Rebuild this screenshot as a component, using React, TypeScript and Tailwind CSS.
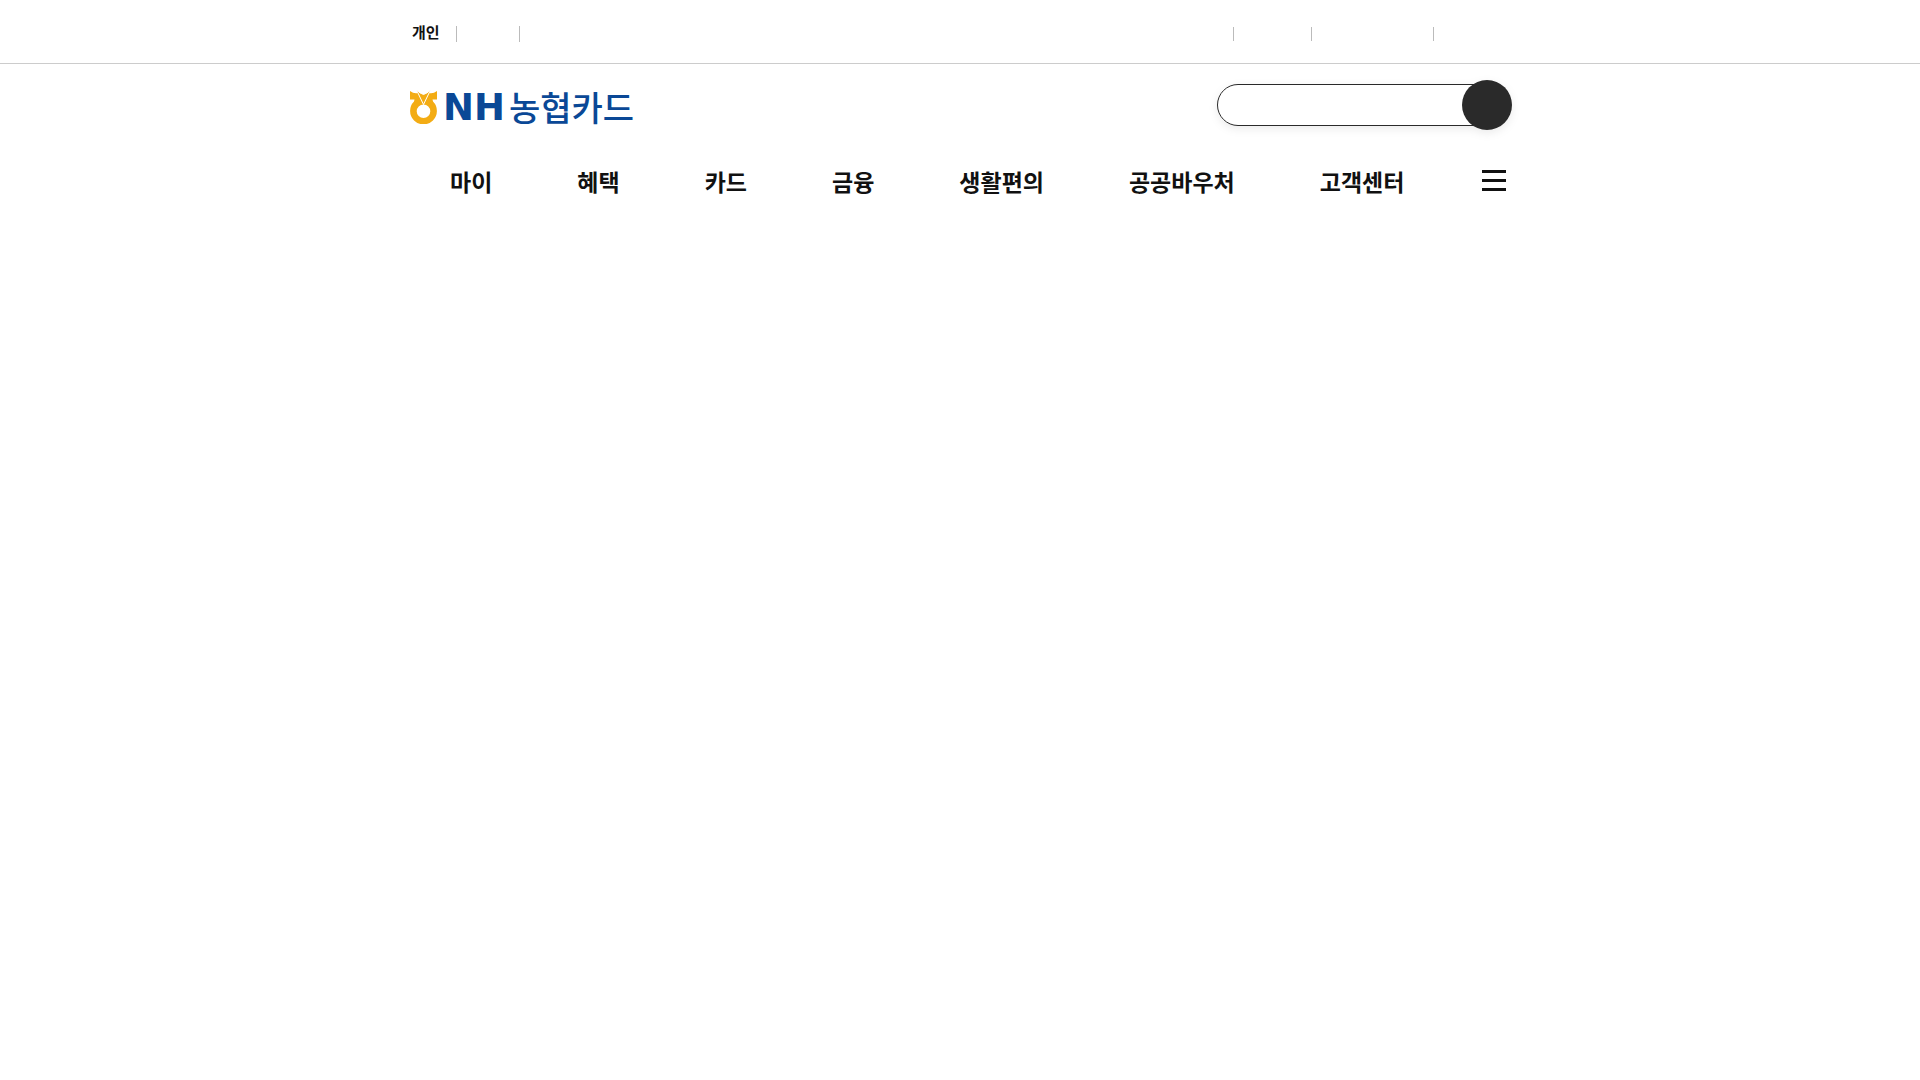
const menu = ['마이', '혜택', '카드', '금융', '생활편의', '공공바우처', '고객센터']

function TopBar() {
  return (
    <div className="border-b border-[#ccc]">
      <div className="mx-auto flex h-[63px] w-full max-w-[1100px] items-center justify-between pt-1">
        <div className="flex items-center">
          <a href="#personal" className="w-[46px] pb-1 pl-[2px] text-[15px] leading-[20px] font-bold">개인</a>
          <span className="h-4 w-px bg-[#bbb]" />
          <span className="ml-[62px] h-4 w-px bg-[#bbb]" />
        </div>
        <div className="flex items-center pr-[76px]">
          <span className="h-[14px] w-px bg-[#bbb]" />
          <span className="ml-[77px] h-[14px] w-px bg-[#bbb]" />
          <span className="ml-[121px] h-[14px] w-px bg-[#bbb]" />
        </div>
      </div>
    </div>
  )
}

function Logo() {
  return (
    <a href="#home" className="flex items-center text-[#0a4896]">
      <svg viewBox="0 0 27 34" className="h-[34px] w-[27px]" aria-hidden="true">
        <path
          fill="#f3ac14"
          fillRule="evenodd"
          d="M0 1Q4 4 8 3L13.500 13 19 3Q23 4 27 1L27 9.500 22.500 9.500 23 11.500A13.400 13.400 0 1 1 4 11.500L4.500 9.500 0 9.500ZM13.500 14.500A6.800 6.800 0 1 0 13.500 28.100A6.800 6.800 0 1 0 13.500 14.500Z"
        />
        <path fill="#f3ac14" stroke="#fff" strokeWidth="1" d="M6.500 0Q10 3.500 13.500 4.500Q17 3.500 20.500 0L13.500 14.500Z" />
      </svg>
      <span className="ml-[6px] flex items-center gap-1">
        <span className="pt-[2px] font-['DejaVu_Sans',sans-serif] text-[37px] leading-[36px] font-bold">NH</span>
        <span className="text-[34px] leading-[36px] font-medium">농협카드</span>
      </span>
    </a>
  )
}

function Search() {
  return (
    <form className="-mr-[2px] flex items-center drop-shadow-[0_3px_4px_rgba(0,0,0,0.08)]">
      <input
        type="text"
        aria-label="검색어"
        className="-mr-[25px] h-[42px] w-[270px] rounded-l-full border border-[#2a2a2a] bg-white px-5 text-[16px] focus:outline-none"
      />
      <button type="button" aria-label="검색" className="relative size-[50px] rounded-full bg-[#2a2a2a]" />
    </form>
  )
}

export default function App() {
  return (
    <div className="min-h-screen bg-white font-['Noto_Sans_CJK_KR',sans-serif] text-[#111]">
      <header>
        <TopBar />
        <div className="mx-auto w-full max-w-[1100px]">
          <div className="flex items-start justify-between pt-4">
            <div className="pt-2">
              <Logo />
            </div>
            <Search />
          </div>
          <div className="mt-8 flex items-start justify-between pr-1 pl-10">
            <nav className="flex items-center gap-[85px]">
              {menu.map(item => (
                <a key={item} href="#menu" className="text-[23px] leading-[38px] font-bold">{item}</a>
              ))}
            </nav>
            <button type="button" aria-label="전체메뉴" className="mt-2 flex w-6 flex-col gap-[6px]">
              <span className="h-[3px] bg-[#111]" />
              <span className="h-[3px] bg-[#111]" />
              <span className="h-[3px] bg-[#111]" />
            </button>
          </div>
        </div>
      </header>
    </div>
  )
}
